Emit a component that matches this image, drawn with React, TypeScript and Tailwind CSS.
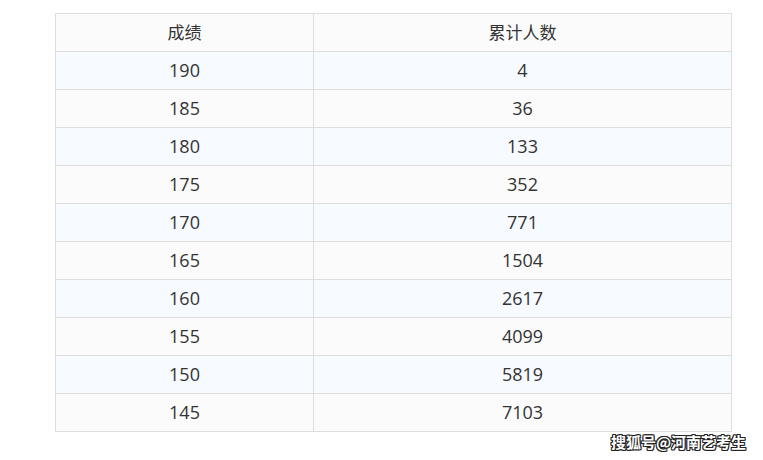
import React from "react";

const rows: [string, string][] = [
  ["190", "4"],
  ["185", "36"],
  ["180", "133"],
  ["175", "352"],
  ["170", "771"],
  ["165", "1504"],
  ["160", "2617"],
  ["155", "4099"],
  ["150", "5819"],
  ["145", "7103"],
];

export default function App() {
  return (
    <div
      className="relative w-[763px] h-[460px] bg-white overflow-hidden"
      style={{ fontFamily: '"Open Sans", "Noto Sans CJK SC", sans-serif' }}
    >
      <div className="pt-[13px] pl-[55px]">
        <table className="border-collapse text-[18px] text-[#333] w-[677px]">
          <tbody>
            <tr className="bg-[#fbfbfb] h-[38px]">
              <td className="border border-[#dddddd] w-[258px] text-center p-0 text-[17px]">成绩</td>
              <td className="border border-[#dddddd] text-center p-0 text-[17px]">累计人数</td>
            </tr>
            {rows.map(([a, b], i) => (
              <tr key={a} className={(i % 2 === 0 ? "bg-[#f7faff]" : "bg-[#fbfbfb]") + " h-[38px]"}>
                <td className="border border-[#dddddd] text-center p-0 leading-[37px]">{a}</td>
                <td className="border border-[#dddddd] text-center p-0 leading-[37px]">{b}</td>
              </tr>
            ))}
          </tbody>
        </table>
      </div>
      <div
        className="absolute left-[611px] top-[431px] text-[15px] leading-[22px] text-white font-bold"
        style={{
          fontFamily: '"Noto Sans CJK SC", sans-serif',
          textShadow:
            "1px 0 0 #222, -1px 0 0 #222, 0 1px 0 #222, 0 -1px 0 #222, 1px 1px 0 #222, -1px -1px 0 #222, 1px -1px 0 #222, -1px 1px 0 #222",
        }}
      >
        搜狐号@河南艺考生
      </div>
    </div>
  );
}
